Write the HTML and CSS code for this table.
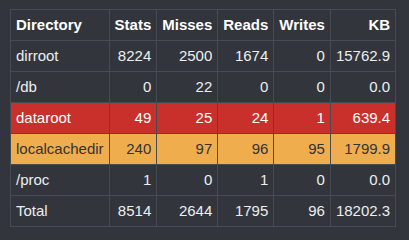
FILE: index.html
```html
<!DOCTYPE html>
<html>
<head>
<meta charset="utf-8">
<link rel="stylesheet" href="styles.css">
</head>
<body>
<div class="wrap">
<table class="stats">
<thead>
<tr><th class="name">Directory</th><th>Stats</th><th>Misses</th><th>Reads</th><th>Writes</th><th>KB</th></tr>
</thead>
<tbody>
<tr><td class="name">dirroot</td><td>8224</td><td>2500</td><td>1674</td><td>0</td><td>15762.9</td></tr>
<tr><td class="name">/db</td><td>0</td><td>22</td><td>0</td><td>0</td><td>0.0</td></tr>
<tr class="danger"><td class="name">dataroot</td><td>49</td><td>25</td><td>24</td><td>1</td><td>639.4</td></tr>
<tr class="warning"><td class="name">localcachedir</td><td>240</td><td>97</td><td>96</td><td>95</td><td>1799.9</td></tr>
<tr><td class="name">/proc</td><td>1</td><td>0</td><td>1</td><td>0</td><td>0.0</td></tr>
<tr><td class="name">Total</td><td>8514</td><td>2644</td><td>1795</td><td>96</td><td>18202.3</td></tr>
</tbody>
</table>
</div>
</body>
</html>
```

FILE: styles.css
```css
html, body {
  margin: 0;
  padding: 0;
  background: #32363c;
}
.wrap {
  padding: 9px 10px;
}
.stats {
  border-collapse: collapse;
  font-family: "Liberation Sans", Arial, sans-serif;
  font-size: 15px;
  color: #eceef0;
}
.stats th, .stats td {
  border: 1px solid #474c54;
  padding: 6px 5px;
  line-height: 18px;
  text-align: right;
  white-space: nowrap;
}
.stats th {
  font-weight: bold;
  color: #ffffff;
}
.stats .name {
  text-align: left;
}
.stats tr.danger td {
  background: #c9302c;
  color: #ffffff;
}
.stats tr.warning td {
  background: #f0ad4e;
  color: #333333;
}
```
